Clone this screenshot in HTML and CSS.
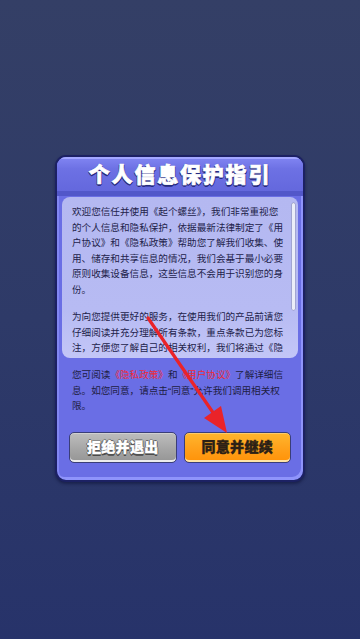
FILE: index.html
```html
<!DOCTYPE html>
<html lang="zh-CN">
<head>
<meta charset="utf-8">
<title>个人信息保护指引</title>
<link rel="stylesheet" href="styles.css">
</head>
<body>
<div class="page">
  <div class="dialog">
    <div class="title">个人信息保护指引</div>
    <div class="band"></div>
    <div class="box">
      <p class="para">欢迎您信任并使用《起个螺丝》，我们非常重视您的个人信息和隐私保护，依据最新法律制定了《用户协议》和《隐私政策》帮助您了解我们收集、使用、储存和共享信息的情况，我们会基于最小必要原则收集设备信息，这些信息不会用于识别您的身份。</p>
      <p class="para second">为向您提供更好的服务，在使用我们的产品前请您仔细阅读并充分理解所有条款，重点条款已为您标注，方便您了解自己的相关权利，我们将通过《隐私政策》和《用户协议》向您说明我们如何收集、使用和保护您的个人信息。</p>
      <div class="scrollbar"></div>
    </div>
    <p class="notice">您可阅读<span class="link">《隐私政策》</span>和<span class="link">《用户协议》</span>了解详细信息。如您同意，请点击<span class="q">“</span>同意<span class="q">”</span>允许我们调用相关权限。</p>
    <div class="buttons">
      <button class="btn btn-gray">拒绝并退出</button>
      <button class="btn btn-orange">同意并继续</button>
    </div>
  </div>
  <svg class="arrow" width="360" height="639" viewBox="0 0 360 639">
    <line x1="148" y1="318" x2="214" y2="414" stroke="#ea2329" stroke-width="3.2" stroke-linecap="round"/>
    <polygon points="227,433 204,418 221,406" fill="#ea2329"/>
  </svg>
</div>
</body>
</html>
```
FILE: styles.css
```css
* { box-sizing: border-box; }
html, body { margin: 0; padding: 0; }
body {
  width: 360px;
  height: 639px;
  overflow: hidden;
  background: linear-gradient(180deg, #343f66 0%, #2e3a68 50%, #27336a 100%);
  font-family: "Noto Sans CJK SC", "Noto Sans", sans-serif;
}
.page {
  position: relative;
  width: 360px;
  height: 639px;
  padding-top: 155px;
  padding-left: 55px;
}
.dialog {
  width: 250px;
  border: 2px solid #1c2163;
  border-radius: 11px;
  background: #6a6ee5;
  box-shadow: inset -2px -3px 0 #8f94fb, inset 2px 0 0 #8287f2, 0 2px 3px rgba(10, 14, 50, 0.5);
  padding-bottom: 17px;
  overflow: hidden;
}
.title {
  height: 34px;
  display: flex;
  align-items: center;
  justify-content: center;
  padding-bottom: 2px;
  background: linear-gradient(180deg, #8286f3 0%, #6d71e4 35%, #6468dd 100%);
  box-shadow: inset 0 2px 0 #a3a7ff;
  color: #ffffff;
  font-size: 21px;
  font-weight: 900;
  letter-spacing: 1.8px;
  -webkit-text-stroke: 0.7px #ffffff;
  text-shadow: 0 2px 0 #252a80, 1px 1px 0 #2a2f88, -1px 1px 0 #2a2f88, 0 0 1px #2a2f88;
}
.band {
  height: 5px;
  background: #5257c9;
}
.box {
  position: relative;
  margin: 1px 5px 0 5px;
  height: 161px;
  border-radius: 8px;
  background: linear-gradient(180deg, #b4b8f1 0%, #b7bbf3 70%, #c3c6f7 100%);
  padding: 7px 14px 0 10px;
  overflow: hidden;
  color: #22224a;
}
.para {
  margin: 0;
  width: 212px;
  font-size: 9.6px;
  line-height: 15.5px;
}
.second {
  margin-top: 12px;
}
.scrollbar {
  position: absolute;
  right: 3px;
  top: 6px;
  width: 3px;
  height: 107px;
  border-radius: 2px;
  background: #eceef8;
  box-shadow: 0 0 0 0.5px #8c8fb0;
}
.notice {
  margin: 9px 0 0 15px;
  width: 213px;
  font-size: 9.6px;
  line-height: 15.5px;
  color: #1d1d42;
}
.q {
  font-family: "Liberation Sans", sans-serif;
}
.link {
  color: #ee2a3a;
}
.buttons {
  display: flex;
  gap: 7px;
  margin: 18px 12px 0 12px;
}
.btn {
  flex: 1;
  height: 31px;
  border: 1px solid #3a3e78;
  border-radius: 5px;
  font-family: "Noto Sans CJK SC", "Noto Sans", sans-serif;
  font-size: 14px;
  font-weight: 900;
  letter-spacing: 0.3px;
  padding: 0 0 2px 0;
  display: flex;
  align-items: center;
  justify-content: center;
}
.btn-gray {
  background: linear-gradient(180deg, #bdbdbd 0%, #a4a4a4 60%, #959595 100%);
  box-shadow: inset 0 -2px 0 #ececec, inset 0 1px 0 #d0d0d0;
  color: #ffffff;
  -webkit-text-stroke: 0.4px #ffffff;
  text-shadow: 1px 0 0 #555, -1px 0 0 #555, 0 1px 0 #555, 0 -1px 0 #555, 0 2px 0 #4a4a4a;
}
.btn-orange {
  background: linear-gradient(180deg, #ffb62e 0%, #ffa01a 55%, #ff9208 100%);
  box-shadow: inset 0 -2px 0 #ffe3a6, inset 0 1px 0 #ffcb6a;
  color: #2b2016;
  -webkit-text-stroke: 0.4px #2b2016;
}
.arrow {
  position: absolute;
  left: 0;
  top: 0;
  pointer-events: none;
}
```
